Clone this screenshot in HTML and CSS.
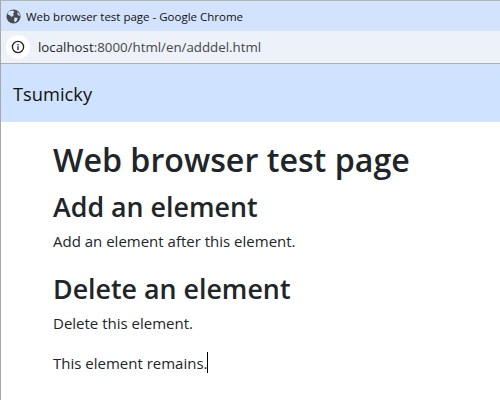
FILE: index.html
```html
<!DOCTYPE html>
<html lang="en">
  <head>
    <meta charset="UTF-8">
    <title>Web browser test page</title>
    <link rel="stylesheet" href="styles.css">
  </head>
  <body>
    <div class="window">
      <div class="title-bar">
        <svg class="globe" viewBox="0 0 16 16" width="15" height="15">
          <circle cx="8" cy="8" r="7.5" fill="#474c52"/>
          <path d="M3 2.5 L7 1.5 L9 3 L7.5 5 L8.5 6.5 L6 8.5 L3.5 6.5 L1.5 5.5 Z M9 9 L12.5 9.5 L11.5 12.5 L9.5 14.5 L8.5 12 Z M12 3 L14.5 5.5 L14.8 7.5 L12.5 6.5 Z" fill="#d3e3fd"/>
        </svg>
        <span class="title-text">Web browser test page - Google Chrome</span>
      </div>
      <div class="address-bar">
        <div class="info-badge">
          <svg viewBox="0 0 14 14" width="14" height="14">
            <circle cx="7" cy="7" r="5.6" fill="none" stroke="#1f1f1f" stroke-width="1.3"/>
            <rect x="6.35" y="6.2" width="1.3" height="3.8" fill="#1f1f1f"/>
            <rect x="6.35" y="4" width="1.3" height="1.3" fill="#1f1f1f"/>
          </svg>
        </div>
        <span class="url"><span class="url-host">localhost</span>:8000/html/en/adddel.html</span>
      </div>
      <nav class="navbar">Tsumicky</nav>
      <main class="content">
        <h1>Web browser test page</h1>
        <h2>Add an element</h2>
        <p>Add an element after this element.</p>
        <h2>Delete an element</h2>
        <p>Delete this element.</p>
        <p>This element remains.<span class="caret"></span></p>
      </main>
    </div>
  </body>
</html>
```

FILE: styles.css
```css
html, body { margin: 0; padding: 0; width: 500px; height: 400px; overflow: hidden; background-color: white; }
body { font-family: "Open Sans", "Noto Sans", sans-serif; color: #212529; }
.window { box-sizing: border-box; width: 500px; height: 400px; border-top: 1px solid #b4b4b4; border-left: 1px solid #a8a8a8; overflow: hidden; }
.title-bar { display: flex; align-items: center; height: 30px; padding-left: 5px; background-color: #d3e3fd; }
.globe { flex: none; }
.title-text { margin-left: 5px; font-size: 11.5px; color: #111; white-space: nowrap; }
.address-bar { display: flex; align-items: center; box-sizing: content-box; height: 32px; padding-left: 5px; background-color: #edf2fa; border-bottom: 1px solid #aeaeae; }
.info-badge { display: flex; justify-content: center; align-items: center; flex: none; width: 24px; height: 24px; border-radius: 50%; background-color: white; }
.url { margin-left: 8px; font-size: 13.3px; color: #474747; white-space: nowrap; }
.url-host { color: #1f1f1f; }
.navbar { display: flex; align-items: center; height: 57px; padding-left: 12px; border-top: 1px solid #d9e0ea; box-sizing: content-box; background-color: #cfe2ff; font-size: 18.3px; color: #111; }
.content { padding: 18px 0 0 52px; }
h1 { margin: 0 0 7px; font-size: 32.2px; line-height: 40px; font-weight: 600; }
h2 { margin: 0 0 6px; padding-top: 3px; font-size: 26.8px; line-height: 33px; font-weight: 600; }
p { margin: 0 0 16px; font-size: 15px; line-height: 24px; }
.caret { display: inline-block; width: 1px; height: 21px; margin-left: -1px; vertical-align: text-bottom; background-color: black; }
```
